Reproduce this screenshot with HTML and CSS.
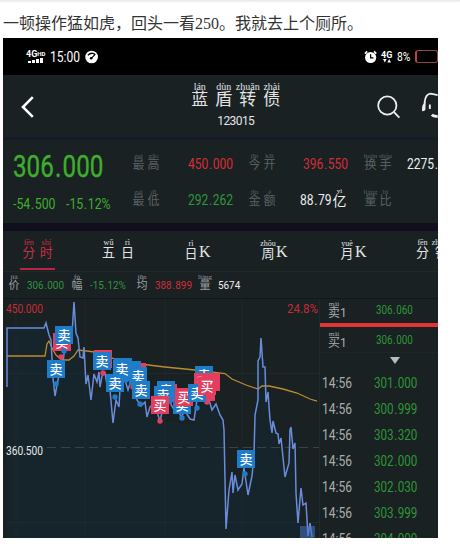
FILE: index.html
```
<!DOCTYPE html>
<html lang="zh-CN">
<head>
  <meta charset="UTF-8">
  <meta name="viewport" content="width=device-width, initial-scale=1.0">
  <title>蓝盾转债</title>
  <link rel="stylesheet" href="styles.css">
</head>
<body>
  <p class="caption">一顿操作猛如虎，回头一看250。我就去上个厕所。</p>

  <div class="phone">
    <div class="status">
      <div class="signal">
        <span>4G<small>HD</small></span>
        <svg width="16" height="6" viewBox="0 0 16 6"><path d="M0 3h3v2H0zM4 2h3v3H4zM8 1h3v4H8zM12 0h3v5h-3z" fill="#fff"/></svg>
      </div>
      <span class="clock num">15:00</span>
      <svg class="gauge" width="14" height="14" viewBox="0 0 14 14"><circle cx="7" cy="7" r="6.7" fill="#fff"/><path d="M3 5.2Q7 1.2 11 4.6M6.5 8.5L10.3 4.8" stroke="#000" stroke-width="1.3" fill="none"/><circle cx="6.5" cy="8.3" r="1.4"/></svg>
      <svg class="alarm" width="14" height="14" viewBox="0 0 14 14"><circle cx="7" cy="7.5" r="5.9" fill="#fff"/><path d="M1 3.4L3.4 1M13 3.4L10.6 1" stroke="#fff" stroke-width="1.7"/><path d="M7 4v4h3" stroke="#000" stroke-width="1.3" fill="none"/></svg>
      <div class="net">
        <span>4G</span>
        <svg width="8" height="4" viewBox="0 0 8 4"><path d="M0 0h3.6L1.8 3.4zM4.4 3.4H8L6.2 0z" fill="#fff"/></svg>
      </div>
      <span class="percent num">8%</span>
      <div class="battery"></div>
    </div>

    <div class="header">
      <svg class="back" width="14" height="22" viewBox="0 0 14 22"><path d="M12 1L2 11l10 10" stroke="#fff" stroke-width="2.6" fill="none"/></svg>
      <div class="name">
        <div class="title"><ruby>蓝<rt>lán</rt></ruby><ruby>盾<rt>dùn</rt></ruby><ruby>转<rt>zhuǎn</rt></ruby><ruby>债<rt>zhài</rt></ruby></div>
        <div class="code">123015</div>
      </div>
      <svg class="search" width="24" height="24" viewBox="0 0 24 24"><circle cx="10.5" cy="10.5" r="9.3" stroke="#eee" stroke-width="1.8" fill="none"/><path d="M17.3 17.3l5.5 5.5" stroke="#eee" stroke-width="1.9"/></svg>
      <svg class="service" width="17" height="27" viewBox="0 0 17 27"><path d="M3.5 11Q4.500 1.500 10 1.500L17 3" stroke="#eee" stroke-width="1.8" fill="none"/><path d="M4.200 10Q1 13 1.500 19L4 18z" fill="#eee" stroke="#eee"/><path d="M9 12.500v4.500" stroke="#eee" stroke-width="2"/><path d="M11 23Q13 25 17 24.500" stroke="#eee" stroke-width="3" fill="none"/></svg>
    </div>

    <div class="stats">
      <div class="price green"><span class="num big">306<i>.</i>000</span></div>
      <div class="label"><ruby>最<rt>zuì</rt></ruby><ruby>高<rt>gāo</rt></ruby></div>
      <div class="red"><span class="num">450<i>.</i>000</span></div>
      <div class="label"><ruby>今<rt>jīn</rt></ruby><ruby>开<rt>kāi</rt></ruby></div>
      <div class="red open"><span class="num">396<i>.</i>550</span></div>
      <div class="label"><ruby>换<rt>huàn</rt></ruby><ruby>手<rt>shǒu</rt></ruby></div>
      <div class="white"><span class="num">2275<i>.</i></span></div>

      <div class="change green"><span class="num">-54<i>.</i>500</span><span class="num">-15<i>.</i>12%</span></div>
      <div class="label"><ruby>最<rt>zuì</rt></ruby><ruby>低<rt>dī</rt></ruby></div>
      <div class="green2"><span class="num">292<i>.</i>262</span></div>
      <div class="label"><ruby>金<rt>jīn</rt></ruby><ruby>额<rt>é</rt></ruby></div>
      <div class="white amount"><span class="num">88<i>.</i>79</span><ruby>亿<rt>yì</rt></ruby></div>
      <div class="label"><ruby>量<rt>liàng</rt></ruby><ruby>比<rt>bǐ</rt></ruby></div>
    </div>

    <div class="tabs">
      <div class="tab active"><ruby>分<rt>fēn</rt></ruby><ruby>时<rt>shí</rt></ruby></div>
      <div class="tab"><ruby>五<rt>wǔ</rt></ruby><ruby>日<rt>rì</rt></ruby></div>
      <div class="tab k"><ruby>日<rt>rì</rt></ruby>K</div>
      <div class="tab k"><ruby>周<rt>zhōu</rt></ruby>K</div>
      <div class="tab k"><ruby>月<rt>yuè</rt></ruby>K</div>
      <div class="tab"><ruby>分<rt>fēn</rt></ruby><ruby>钟<rt>zhōng</rt></ruby></div>
    </div>

    <div class="info">
      <ruby>价<rt>jià</rt></ruby><span class="num green2">306<i>.</i>000</span>
      <ruby>幅<rt>fú</rt></ruby><span class="num green2">-15<i>.</i>12%</span>
      <ruby>均<rt>jūn</rt></ruby><span class="num red">388<i>.</i>899</span>
      <ruby>量<rt>liàng</rt></ruby><span class="num white">5674</span>
    </div>

    <div class="main">
      <svg class="chart" width="317" height="239" viewBox="3 299 317 239">
        <path class="area" d="M7 538V328H45L50 338 55 390 62 370 74 305 80 358 91 395 109 390 113 423 122 370 148 415 160 421 193 424 208 390 223 425 226 529 232 472 248 490 261 338 272 425 285 477 291 427 298 523 312 538z"/>
        <path class="grid" d="M16 299V538M85 299V538M165 299V538M242 299V538M319.500 299V538M7 373.500H319M7 522.500H319"/>
        <path class="grid mid" d="M47 447.500H319"/>
        <path class="avg" d="M7 356H45L47 344 49 341 52 348 56 355 62 360 69 360 74 356 78 350 95 352 115 359 140 364 165 367 195 370 225 373.500 232 379 246 385 258 389 262 386 269 386 283 389 297 393 310 399 317 401"/>
        <path class="line" d="M7 387V328H44L46 323 49 335 51 340 53 378 55 396 57 385 59 375 62 372 65 345 69 330 72 334 74 302 76 333 78 338 80 357 83 358 84 347 86 384 88 375 91 400 94 374 97 382 99 372 100 387 102 376 105 373 108 391 110 390 113 423 116 400 119 407 121 370 125 380 128 390 133 374 137 400 141 406 145 402 147 417 150 407 154 404 157 412 160 421 164 404 168 399 173 408 177 405 181 417 185 411 190 419 194 420 197 400 202 396 206 402 209 400 212 410 216 404 220 415 223 420 224 430 226 529 229 490 232 472 233 493 235 475 238 490 242 484 244 468 248 495 252 476 254 455 255 415 258 400 258 361 260 357 261 338 263 367 265 367 266 402 268 392 270 420 272 433 273 421 276 433 278 434 279 444 281 438 285 477 289 463 290 430 291 427 293 449 295 443 296 493 298 523 301 488 303 505 306 503 308 536 310 523 312 537"/>
        <g id="marks"></g>
        <rect class="volume" x="300" y="526" width="15" height="12"/>
        <text class="axis hot" x="6" y="313" textLength="37" lengthAdjust="spacingAndGlyphs">450.000</text>
        <text class="axis hot" x="287" y="313" textLength="31" lengthAdjust="spacingAndGlyphs">24.8%</text>
        <text class="axis" x="6" y="454.500" textLength="37" lengthAdjust="spacingAndGlyphs">360.500</text>
      </svg>

      <div class="book">
        <div class="level sell"><span><ruby>卖<rt>mài</rt></ruby>1</span><span class="num">306<i>.</i>060</span></div>
        <div class="level buy"><span><ruby>买<rt>mǎi</rt></ruby>1</span><span class="num">306<i>.</i>000</span></div>
        <div class="arrow"></div>
        <div class="deal"><span class="num">14:56</span><span class="num">301<i>.</i>000</span></div>
        <div class="deal"><span class="num">14:56</span><span class="num">300<i>.</i>999</span></div>
        <div class="deal"><span class="num">14:56</span><span class="num">303<i>.</i>320</span></div>
        <div class="deal"><span class="num">14:56</span><span class="num">302<i>.</i>000</span></div>
        <div class="deal"><span class="num">14:56</span><span class="num">302<i>.</i>030</span></div>
        <div class="deal"><span class="num">14:56</span><span class="num">303<i>.</i>999</span></div>
        <div class="deal"><span class="num">14:56</span><span class="num">304<i>.</i>000</span></div>
      </div>
    </div>
  </div>

  <script>
    // x, y, type (s = sell, b = buy), dot x, dot y, no label
    const marks = [
      [62, 342, 'b', 61, 357], [64, 335, 's', 64, 351], [56, 369, 's', 56, 384],
      [103, 359, 'b', 103, 373, 1], [102, 361, 's'],
      [137, 372, 'b', 133, 387, 1], [132, 370, 's', 0, 0, 1], [123, 367, 's', 126, 380, 1], [138, 376, 's'],
      [122, 369, 's'], [115, 383, 's', 115, 397], [141, 390, 's', 140, 404],
      [168, 393, 'b', 0, 0, 1], [166, 390, 's'], [163, 395, 's'], [160, 405, 'b', 160, 421],
      [182, 405, 's', 182, 418], [184, 397, 'b'],
      [204, 375, 's'], [206, 392, 'b', 207, 402, 1], [203, 382, 'b'], [211, 382, 'b', 0, 0, 1],
      [197, 393, 's', 197, 408], [207, 386, 'b'], [246, 459, 's', 245, 474]
    ];
    let html = '';
    marks.forEach(([x, y, type, dx, dy, blank]) => {
      html += `<g class="mark ${type}">`;
      if (dx) html += `<circle cx="${dx}" cy="${dy}" r="2.7"/>`;
      html += `<rect x="${x - 9}" y="${y - 9}" width="18" height="18"/>`;
      if (!blank) html += `<text x="${x}" y="${y + 4.5}">${type === 's' ? '卖' : '买'}</text>`;
      html += '</g>';
    });
    document.getElementById('marks').innerHTML = html;
  </script>
</body>
</html>
```
FILE: styles.css
```
* {
  box-sizing: border-box;
}

body {
  margin: 0;
  height: 547px;
  overflow: hidden;
  background: linear-gradient(#e6e6e6, #fff 3px);
  font-family: Roboto, "Noto Sans CJK SC", sans-serif;
}

.caption {
  margin: 0;
  height: 38px;
  padding: 12px 0 0 3px;
  font: 16px/24px "Liberation Serif", "Noto Sans CJK SC", serif;
  color: #333;
  white-space: nowrap;
}

.phone {
  width: 435px;
  height: 500px;
  margin-left: 3px;
  overflow: hidden;
  background: #192123;
  color: #e4e4e4;
}

/* narrow digits, slightly wider point */
.num {
  display: inline-block;
  transform: scaleX(0.86);
  transform-origin: left center;
  white-space: nowrap;
}

.num i {
  font-style: normal;
  padding: 0 0.05em;
}

/* pinyin above each character */
ruby {
  display: inline-flex;
  flex-direction: column-reverse;
  align-items: center;
  width: 15px;
  line-height: 1;
}

rt {
  display: block;
  height: 6px;
  font: 7px/6px "Liberation Serif", serif;
  white-space: nowrap;
}

.green { color: #3fae2d; }
.green2 { color: #319440; }
.red { color: #d52d36; }
.white { color: #eee; }

/* status bar */
.status {
  display: flex;
  align-items: center;
  height: 37px;
  padding-left: 23px;
  background: #000;
  color: #fff;
}

.signal {
  width: 25px;
  font-size: 9px;
  font-weight: bold;
  line-height: 8px;
}

.signal span,
.signal svg,
.net span,
.net svg {
  display: block;
}

.signal small {
  font-size: 6px;
  vertical-align: 1px;
}

.signal svg { margin-left: 2px; }

.clock {
  width: 35px;
  font-size: 14px;
  transform: scaleX(0.86);
}

.gauge { margin-right: 266px; }

.alarm { margin-right: 4px; }

.net {
  width: 17px;
  font-size: 9px;
  font-weight: bold;
  line-height: 8px;
}

.net svg { margin-left: 2px; }

.percent {
  width: 19px;
  font-size: 12px;
}

.battery {
  width: 24px;
  height: 13px;
  border: 1px solid #8b4a4a;
  border-left: 2px solid #c04040;
  border-radius: 3px;
}

/* header */
.header {
  display: flex;
  height: 65px;
  padding-left: 18px;
  border-bottom: 3px solid #151b29;
}

.back { margin-top: 21px; }

.name {
  width: 96px;
  margin-left: 153px;
  padding-top: 8px;
  text-align: center;
}

.title {
  display: flex;
  height: 30px;
  align-items: flex-start;
  font-size: 17px;
}

.title ruby { width: 24px; }

.title rt {
  height: 8px;
  font-size: 10px;
  line-height: 8px;
}

.code {
  font-size: 12px;
  line-height: 17px;
  letter-spacing: -0.6px;
}

.search { margin: 20px 0 0 93px; }

.service { margin: 17px 0 0 21px; }

/* quote figures */
.stats {
  display: grid;
  grid-template-columns: 118px 57px 59px 53px 63px 44px 31px;
  grid-template-rows: 36px 36px;
  height: 83px;
  padding: 6px 0 0 10px;
  font-size: 14px;
}

.stats > div {
  display: flex;
  align-items: center;
  min-width: 0;
}

.stats .price { padding-top: 5px; }

.stats .big {
  font-size: 31px;
  transform: scaleX(0.78);
  -webkit-text-stroke: 0.4px;
}

.stats .change { padding-top: 8px; }

.change .num {
  width: 53px;
  transform: scaleX(0.88);
}

.stats .label {
  color: #596163;
  font-size: 12px;
  padding-bottom: 5px;
}

.stats .open { padding-left: 3px; }

.amount .num { width: 32px; }

.amount ruby { padding-bottom: 5px; }

/* tabs */
.tabs {
  display: grid;
  grid-template-columns: 79px 84px 77px 79px 74px 40px;
  height: 48px;
  padding-left: 17px;
  border-top: 8px solid #110e1e;
}

.tab {
  height: 39px;
  display: flex;
  align-items: flex-end;
  padding-bottom: 11px;
  font-size: 13px;
}

.tab ruby { width: 19px; }

.tab.k {
  font-family: "Liberation Serif", "Noto Sans CJK SC", serif;
  font-size: 16px;
  line-height: 1;
  padding-bottom: 10px;
}

.tab.k ruby {
  width: 16px;
  font-size: 13px;
}

.tab rt { font-size: 8px; }

.tab.active {
  width: 35px;
  padding-bottom: 9px;
  color: #d12a43;
  border-bottom: 2px solid #b92540;
}

/* line under the tabs */
.info {
  display: flex;
  height: 28px;
  align-items: center;
  border-top: 1px solid #20292a;
  border-bottom: 1px solid #11171a;
  padding-left: 4px;
  font-size: 11.5px;
}

.info ruby {
  width: 14px;
  margin-bottom: 5px;
  font-size: 11px;
  color: #9a9fa0;
}

.info .num { margin-left: 6px; width: 43px; }
.info .green2 + ruby + .green2 { width: 45px; }

/* chart and order book */
.main {
  display: flex;
}

.chart {
  flex: none;
  display: block;
}

.area { fill: #15252b; }

.grid {
  stroke: #1f2a2e;
  fill: none;
}

.mid {
  stroke: #35434a;
  stroke-dasharray: 9 5;
}

.avg {
  fill: none;
  stroke: #bd8b2f;
  stroke-width: 1.3;
}

.line {
  fill: none;
  stroke: #6a8cda;
  stroke-width: 1.5;
}

.volume {
  fill: #4672c4;
  opacity: 0.55;
}

.axis {
  font-size: 12px;
  fill: #e8e8e8;
}

.hot { fill: #c52c37; }

.mark text {
  fill: #fff;
  font-size: 13px;
  font-weight: 500;
  text-anchor: middle;
}

.s { fill: #1f7cc9; }
.b { fill: #e43d5e; }

.book {
  width: 118px;
}

.level {
  display: grid;
  grid-template-columns: 48px 1fr;
  align-items: center;
  height: 27px;
  padding-left: 8px;
  font-size: 12px;
  color: #a7acad;
}

.level span:first-child {
  display: flex;
  align-items: flex-end;
}

.level ruby {
  width: 12px;
  font-size: 12px;
  padding-bottom: 1px;
}

.level .num {
  color: #2f9636;
  transform: scaleX(0.82);
}

.sell {
  height: 28px;
  padding-bottom: 2px;
  border-bottom: 4px solid #e23538;
}

.buy { height: 26px; }

/* expand handle */
.arrow {
  height: 18px;
  margin-top: -1px;
  border-top: 1px solid #1e2728;
}

.arrow::before {
  content: "";
  display: block;
  width: 0;
  margin: 4px 0 0 70px;
  border: 5px solid transparent;
  border-top: 7px solid #b9bdbe;
  border-bottom: 0;
}

.deal {
  display: grid;
  grid-template-columns: 52px 1fr;
  align-items: center;
  height: 26px;
  padding-left: 2px;
  font-size: 14px;
  color: #a9adae;
}

.deal .num + .num {
  color: #2f9636;
  transform: scaleX(0.83);
}

.deal .num:first-child { transform: scaleX(0.86); }
```
